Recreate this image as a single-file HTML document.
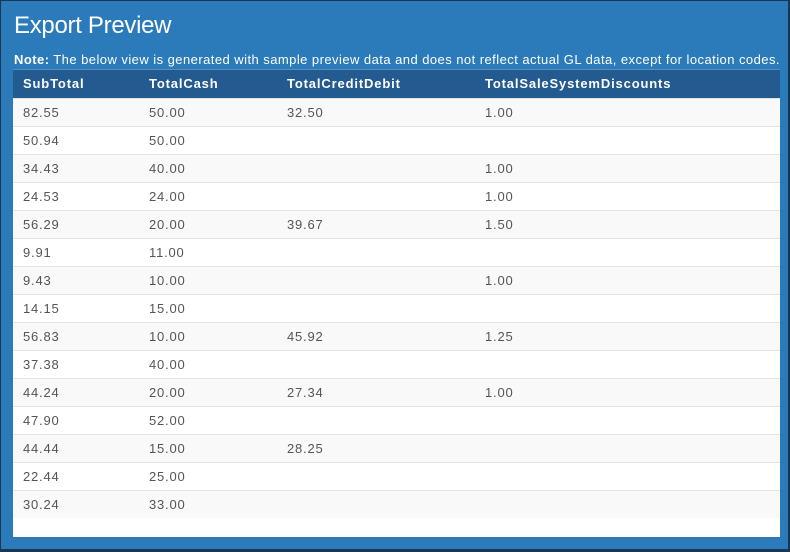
<!DOCTYPE html>
<html><head><style>
*{margin:0;padding:0;box-sizing:border-box}
body{width:790px;height:552px;overflow:hidden;font-family:"Liberation Sans",Arial,sans-serif;background:#1c3550}
.outer{position:absolute;left:1px;top:1px;width:788px;height:549px;background:#2b7bba;border-right:1px solid #1c3550;border-bottom:1px solid #1c3550}
h1{position:absolute;left:13px;top:11px;font-size:24px;font-weight:normal;color:#fff;letter-spacing:-0.3px}
.note{position:absolute;left:13px;top:51px;font-size:13px;color:#fff;white-space:nowrap;letter-spacing:0.45px}
.panel{position:absolute;left:12px;top:68px;width:767px;height:468px;background:#fff;border-top:1px solid #5a8cbc}
table{border-collapse:collapse;width:100%}
th{background:#235a8f;color:#fff;font-size:13px;font-weight:bold;text-align:left;height:28px;padding:0 0 0 10px;letter-spacing:0.85px}
td{height:28px;font-size:13px;color:#555;padding:0 0 0 10px;border-top:1px solid #e2e2e2;letter-spacing:0.8px}
tr:nth-child(odd) td{background:#f9f9f9}
</style></head><body>
<div class="outer">
<h1>Export Preview</h1>
<div class="note"><b>Note:</b> The below view is generated with sample preview data and does not reflect actual GL data, except for location codes.</div>
<div class="panel">
<table>
<colgroup><col style="width:126px"><col style="width:138px"><col style="width:198px"><col></colgroup>
<thead><tr><th>SubTotal</th><th>TotalCash</th><th>TotalCreditDebit</th><th>TotalSaleSystemDiscounts</th></tr></thead>
<tbody>
<tr><td>82.55</td><td>50.00</td><td>32.50</td><td>1.00</td></tr>
<tr><td>50.94</td><td>50.00</td><td></td><td></td></tr>
<tr><td>34.43</td><td>40.00</td><td></td><td>1.00</td></tr>
<tr><td>24.53</td><td>24.00</td><td></td><td>1.00</td></tr>
<tr><td>56.29</td><td>20.00</td><td>39.67</td><td>1.50</td></tr>
<tr><td>9.91</td><td>11.00</td><td></td><td></td></tr>
<tr><td>9.43</td><td>10.00</td><td></td><td>1.00</td></tr>
<tr><td>14.15</td><td>15.00</td><td></td><td></td></tr>
<tr><td>56.83</td><td>10.00</td><td>45.92</td><td>1.25</td></tr>
<tr><td>37.38</td><td>40.00</td><td></td><td></td></tr>
<tr><td>44.24</td><td>20.00</td><td>27.34</td><td>1.00</td></tr>
<tr><td>47.90</td><td>52.00</td><td></td><td></td></tr>
<tr><td>44.44</td><td>15.00</td><td>28.25</td><td></td></tr>
<tr><td>22.44</td><td>25.00</td><td></td><td></td></tr>
<tr><td>30.24</td><td>33.00</td><td></td><td></td></tr>
</tbody></table>
</div>
</div>
</body></html>
